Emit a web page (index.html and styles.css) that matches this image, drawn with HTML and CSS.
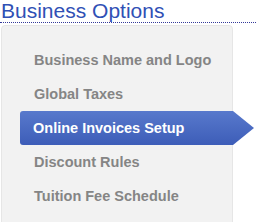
FILE: index.html
```html
<!DOCTYPE html>
<html lang="en">
<head>
  <meta charset="UTF-8">
  <title>Business Options</title>
  <link rel="stylesheet" href="styles.css">
</head>
<body>
  <h1 class="page-title">Business Options</h1>
  <div class="options-panel">
    <ul class="options-list">
      <li class="option-item">Business Name and Logo</li>
      <li class="option-item">Global Taxes</li>
      <li class="option-item active">Online Invoices Setup</li>
      <li class="option-item">Discount Rules</li>
      <li class="option-item">Tuition Fee Schedule</li>
    </ul>
  </div>
</body>
</html>
```

FILE: styles.css
```css
body {
  margin: 0;
  font-family: "Liberation Sans", Arial, sans-serif;
  background-color: #fff;
  overflow: hidden;
}

.page-title {
  margin: 0;
  padding-left: 1px;
  font-size: 21px;
  font-weight: normal;
  line-height: 22px;
  color: #3050b5;
  border-bottom: 1px dotted #33399a;
}

.options-panel {
  margin: 2px 23px 0 1px;
  padding: 17px 0 17px;
  background-color: #f2f2f2;
  border: 1px solid #e6e6e6;
  border-radius: 4px;
}

.options-list {
  list-style: none;
  margin: 0;
  padding: 0;
}

.option-item {
  margin: 0 -22px 0 18px;
  padding-left: 14px;
  height: 34px;
  line-height: 34px;
  font-size: 14.5px;
  font-weight: bold;
  color: #858585;
}

.option-item.active {
  padding-left: 13px;
  color: #fff;
  background: linear-gradient(#5879cc, #3d5db8);
  border-radius: 3px 0 0 3px;
  clip-path: polygon(0 0, calc(100% - 21px) 0, 100% 50%, calc(100% - 21px) 100%, 0 100%);
}
```
